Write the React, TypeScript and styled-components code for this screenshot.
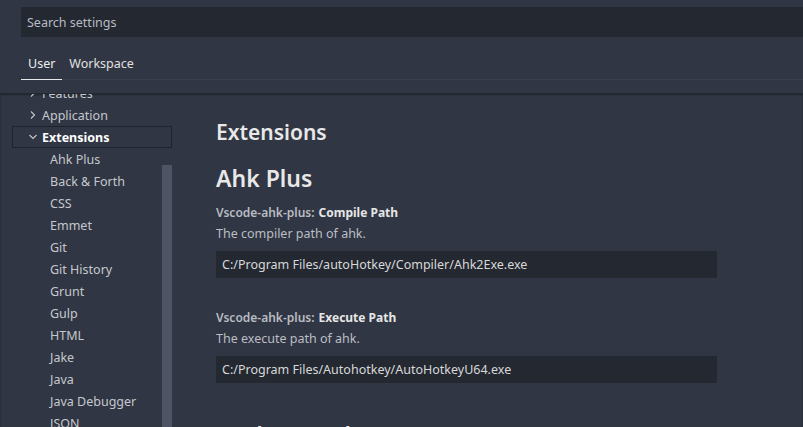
import React from "react";
import styled, { createGlobalStyle } from "styled-components";

const GlobalStyle = createGlobalStyle`
  html, body {
    margin: 0;
    padding: 0;
    background: #303643;
  }
  body {
    font-family: "Noto Sans", "Open Sans", sans-serif;
    color: #cccccc;
  }
  * { box-sizing: border-box; }
`;

const Page = styled.div`
  width: 803px;
  height: 427px;
  overflow: hidden;
  display: flex;
  flex-direction: column;
  background: #303643;
`;

const Header = styled.div`
  padding: 7px 0 0 21px;
  height: 93px;
  flex-shrink: 0;
  display: flex;
  flex-direction: column;
`;

const SearchBox = styled.div`
  height: 30px;
  background: #232831;
  display: flex;
  align-items: center;
  padding: 1px 0 0 6px;
  font-size: 12.5px;
  color: #b8bcc4;
`;

const TabBar = styled.div`
  margin-top: 11px;
  height: 32px;
  display: flex;
  border-bottom: 1px solid #3a404d;
`;

const Tab = styled.div<{ $active?: boolean }>`
  padding: 0 7px;
  display: flex;
  align-items: center;
  font-size: 12.5px;
  color: ${(p) => (p.$active ? "#eeeeee" : "#e0e0e0")};
  border-bottom: 1px solid ${(p) => (p.$active ? "#e8e8e8" : "transparent")};
  margin-bottom: -1px;
`;

const Body = styled.div`
  flex: 1;
  display: flex;
  overflow: hidden;
  border-top: 1px solid #232831;
  box-shadow: inset 0 1px 2px rgba(0, 0, 0, 0.35);
`;

const TreePane = styled.div`
  width: 172px;
  flex-shrink: 0;
  padding-left: 12px;
  position: relative;
  overflow: hidden;
`;

const TreeList = styled.div`
  margin-top: -12px;
`;

const TreeRow = styled.div<{ $depth: number; $selected?: boolean; $bold?: boolean }>`
  height: 22px;
  display: flex;
  align-items: center;
  padding-left: ${(p) => (p.$depth === 0 ? 29 : 37)}px;
  position: relative;
  font-size: 12.5px;
  font-weight: ${(p) => (p.$bold ? 700 : 400)};
  color: ${(p) => (p.$bold ? "#ffffff" : "#c5c8ce")};
  border: 1px solid ${(p) => (p.$selected ? "#1f232b" : "transparent")};
`;

const Chevron = styled.svg`
  position: absolute;
  left: 15px;
  top: 5px;
  width: 10px;
  height: 10px;
`;

const Scrollbar = styled.div`
  position: absolute;
  right: 0;
  top: 71px;
  bottom: 0;
  width: 10px;
  background: #4e5464;
`;

const Content = styled.div`
  flex: 1;
  padding: 20px 0 0 44px;
`;

const GroupTitle = styled.div`
  font-size: 21px;
  font-weight: 600;
  color: #e8e8e8;
  height: 36px;
  display: flex;
  align-items: center;
`;

const SectionTitle = styled.div`
  font-size: 23px;
  font-weight: 600;
  color: #e8e8e8;
  margin-top: 9px;
  height: 38px;
  display: flex;
  align-items: center;
`;

const Setting = styled.div`
  padding-top: 6px;
  height: 105px;
`;

const Label = styled.div`
  font-size: 12px;
  font-weight: 600;
  color: #b9bcc2;
  height: 18px;
  display: flex;
  align-items: center;
  b {
    color: #e6e6e6;
    font-weight: 700;
    margin-left: 4px;
  }
`;

const Description = styled.div`
  font-size: 12.5px;
  color: #bbbec4;
  margin-top: 2px;
  height: 20px;
  display: flex;
  align-items: center;
`;

const Input = styled.div`
  margin-top: 8px;
  width: 501px;
  height: 27px;
  background: #232831;
  display: flex;
  align-items: center;
  padding-left: 6px;
  font-size: 12.5px;
  color: #d8d8d8;
`;

const ChevronRight = () => (
  <Chevron viewBox="0 0 10 10">
    <path d="M3 1.5 L6.5 5 L3 8.5" fill="none" stroke="#c5c8ce" strokeWidth="1.1" />
  </Chevron>
);

const ChevronDown = () => (
  <Chevron viewBox="0 0 10 10">
    <path d="M1.5 3 L5 6.5 L8.5 3" fill="none" stroke="#c5c8ce" strokeWidth="1.1" />
  </Chevron>
);

const children = [
  "Ahk Plus",
  "Back & Forth",
  "CSS",
  "Emmet",
  "Git",
  "Git History",
  "Grunt",
  "Gulp",
  "HTML",
  "Jake",
  "Java",
  "Java Debugger",
  "JSON",
];

const settings = [
  {
    prefix: "Vscode-ahk-plus:",
    name: "Compile Path",
    desc: "The compiler path of ahk.",
    value: "C:/Program Files/autoHotkey/Compiler/Ahk2Exe.exe",
  },
  {
    prefix: "Vscode-ahk-plus:",
    name: "Execute Path",
    desc: "The execute path of ahk.",
    value: "C:/Program Files/Autohotkey/AutoHotkeyU64.exe",
  },
];

export default function App() {
  return (
    <>
      <GlobalStyle />
      <Page>
        <Header>
          <SearchBox>Search settings</SearchBox>
          <TabBar>
            <Tab $active>User</Tab>
            <Tab>Workspace</Tab>
          </TabBar>
        </Header>
        <Body>
          <TreePane>
            <TreeList>
              <TreeRow $depth={0}>
                <ChevronRight />
                Features
              </TreeRow>
              <TreeRow $depth={0}>
                <ChevronRight />
                Application
              </TreeRow>
              <TreeRow $depth={0} $selected $bold>
                <ChevronDown />
                Extensions
              </TreeRow>
              {children.map((c) => (
                <TreeRow key={c} $depth={1}>
                  {c}
                </TreeRow>
              ))}
            </TreeList>
            <Scrollbar />
          </TreePane>
          <Content>
            <GroupTitle>Extensions</GroupTitle>
            <SectionTitle>Ahk Plus</SectionTitle>
            {settings.map((s) => (
              <Setting key={s.name}>
                <Label>
                  {s.prefix}
                  <b>{s.name}</b>
                </Label>
                <Description>{s.desc}</Description>
                <Input>{s.value}</Input>
              </Setting>
            ))}
            <SectionTitle>Back &amp; Forth</SectionTitle>
          </Content>
        </Body>
      </Page>
    </>
  );
}
